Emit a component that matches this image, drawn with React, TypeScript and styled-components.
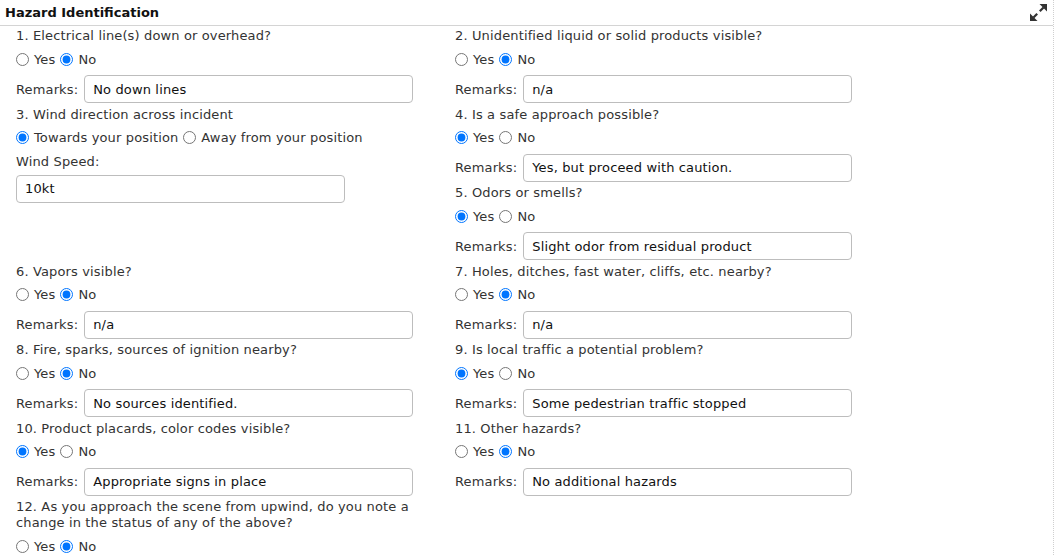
import React from "react";
import styled, { createGlobalStyle } from "styled-components";

const GlobalStyle = createGlobalStyle`
  html, body {
    margin: 0;
    padding: 0;
    background: #ffffff;
  }
  body {
    font-family: "DejaVu Sans", Verdana, sans-serif;
    font-size: 13px;
    letter-spacing: 0.14px;
    color: #333333;
  }
`;

const Panel = styled.section`
  width: 1054px;
  min-height: 556px;
  border-right: 1px dotted #cfcfcf;
  box-sizing: border-box;
`;

const Header = styled.header`
  height: 26px;
  box-sizing: border-box;
  padding: 0 6px 0 5px;
  display: flex;
  align-items: center;
  justify-content: space-between;
  border-bottom: 1px solid #d4d4d4;
`;

const Title = styled.h2`
  margin: 0;
  font-size: 13px;
  font-weight: bold;
  letter-spacing: 0;
  color: #111111;
  line-height: 16px;
`;

const ExpandButton = styled.button`
  border: 0;
  background: none;
  padding: 0;
  display: flex;
  color: #333333;
  cursor: pointer;
`;

const Body = styled.div`
  display: grid;
  grid-template-columns: 439px 1fr;
  padding: 1.5px 16px 0;
`;

const Cell = styled.div`
  display: flex;
  flex-direction: column;
  padding-right: 12px;
`;

const Question = styled.div`
  display: flex;
  flex-direction: column;
  padding-bottom: 3px;
`;

const Prompt = styled.div`
  padding-top: 0.5px;
  line-height: 16px;
`;

const Options = styled.div`
  margin-top: 5px;
  height: 20px;
  display: flex;
  align-items: center;
  gap: 5px;
`;

const Option = styled.label`
  display: inline-flex;
  align-items: center;
  gap: 5px;
  cursor: pointer;
`;

const Radio = styled.input`
  margin: 0;
  width: 13px;
  height: 13px;
`;

const FieldRow = styled.div`
  margin-top: 6px;
  display: flex;
  align-items: center;
  gap: 6px;
`;

const FieldLabel = styled.div`
  margin-top: 6px;
  line-height: 16px;
`;

const TextBox = styled.input<{ $top?: number }>`
  margin-top: ${(p) => p.$top ?? 0}px;
  width: 329px;
  height: 28px;
  box-sizing: border-box;
  border: 1px solid #bdbdbd;
  border-radius: 4px;
  padding: 0 8px;
  font-family: "DejaVu Sans", Verdana, sans-serif;
  font-size: 13px;
  letter-spacing: 0.14px;
  color: #111111;
  background: #ffffff;
`;

// Two-way diagonal arrow used for the panel's expand control
function ExpandIcon() {
  return (
    <svg width="17" height="17" viewBox="0 0 17 17" fill="currentColor">
      <polygon points="17,0 17,7.5 9.5,0" />
      <line x1="13.5" y1="3.5" x2="9.8" y2="7.2" stroke="currentColor" strokeWidth="2.2" />
      <polygon points="0,17 0,9.5 7.5,17" />
      <line x1="3.5" y1="13.5" x2="7.2" y2="9.8" stroke="currentColor" strokeWidth="2.2" />
    </svg>
  );
}

type QProps = {
  id: string;
  text: string;
  options?: string[];
  value: string;
  remarks?: string;
};

function YesNo({ id, text, options = ["Yes", "No"], value, remarks }: QProps) {
  return (
    <Question>
      <Prompt>{text}</Prompt>
      <Options>
        {options.map((o) => (
          <Option key={o}>
            <Radio type="radio" name={id} defaultChecked={o === value} />
            {o}
          </Option>
        ))}
      </Options>
      {remarks !== undefined && (
        <FieldRow>
          <span>Remarks:</span>
          <TextBox type="text" defaultValue={remarks} />
        </FieldRow>
      )}
    </Question>
  );
}

export default function App() {
  return (
    <>
      <GlobalStyle />
      <Panel>
        <Header>
          <Title>Hazard Identification</Title>
          <ExpandButton aria-label="Expand">
            <ExpandIcon />
          </ExpandButton>
        </Header>
        <Body>
          <Cell>
            <YesNo id="q1" text="1. Electrical line(s) down or overhead?" value="No" remarks="No down lines" />
          </Cell>
          <Cell>
            <YesNo id="q2" text="2. Unidentified liquid or solid products visible?" value="No" remarks="n/a" />
          </Cell>

          <Cell>
            <Question>
              <Prompt>3. Wind direction across incident</Prompt>
              <Options>
                <Option>
                  <Radio type="radio" name="q3" defaultChecked />
                  Towards your position
                </Option>
                <Option>
                  <Radio type="radio" name="q3" />
                  Away from your position
                </Option>
              </Options>
              <FieldLabel>Wind Speed:</FieldLabel>
              <TextBox type="text" defaultValue="10kt" $top={5} />
            </Question>
          </Cell>
          <Cell>
            <YesNo id="q4" text="4. Is a safe approach possible?" value="Yes" remarks="Yes, but proceed with caution." />
            <YesNo id="q5" text="5. Odors or smells?" value="Yes" remarks="Slight odor from residual product" />
          </Cell>

          <Cell>
            <YesNo id="q6" text="6. Vapors visible?" value="No" remarks="n/a" />
          </Cell>
          <Cell>
            <YesNo id="q7" text="7. Holes, ditches, fast water, cliffs, etc. nearby?" value="No" remarks="n/a" />
          </Cell>

          <Cell>
            <YesNo id="q8" text="8. Fire, sparks, sources of ignition nearby?" value="No" remarks="No sources identified." />
          </Cell>
          <Cell>
            <YesNo id="q9" text="9. Is local traffic a potential problem?" value="Yes" remarks="Some pedestrian traffic stopped" />
          </Cell>

          <Cell>
            <YesNo id="q10" text="10. Product placards, color codes visible?" value="Yes" remarks="Appropriate signs in place" />
          </Cell>
          <Cell>
            <YesNo id="q11" text="11. Other hazards?" value="No" remarks="No additional hazards" />
          </Cell>

          <Cell>
            <YesNo
              id="q12"
              text="12. As you approach the scene from upwind, do you note a change in the status of any of the above?"
              value="No"
            />
          </Cell>
        </Body>
      </Panel>
    </>
  );
}
